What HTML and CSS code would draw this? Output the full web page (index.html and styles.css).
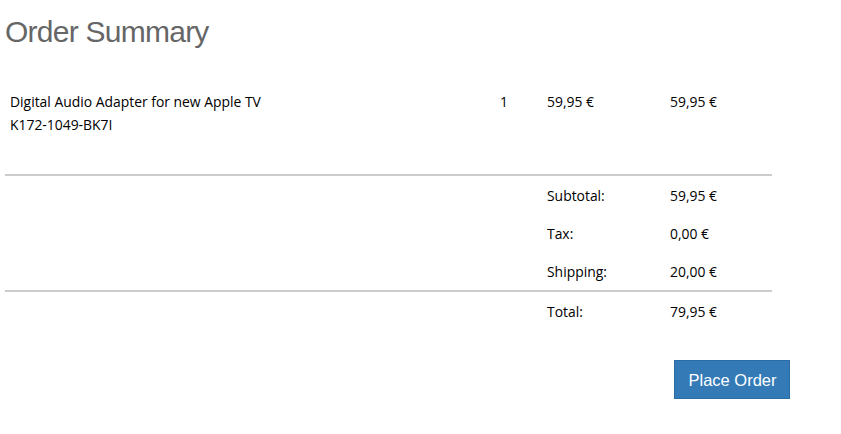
FILE: index.html
```html
<!DOCTYPE html>
<html>
<head>
<meta charset="utf-8">
<link rel="stylesheet" href="styles.css">
</head>
<body>
<div class="page">
  <h1 class="title">Order Summary</h1>
  <table class="summary">
    <colgroup>
      <col class="c-name"><col class="c-qty"><col class="c-price"><col class="c-total">
    </colgroup>
    <tbody>
      <tr class="item">
        <td><div>Digital Audio Adapter for new Apple TV</div><div>K172-1049-BK7I</div></td>
        <td class="top">1</td>
        <td class="top">59,95 €</td>
        <td class="top">59,95 €</td>
      </tr>
      <tr class="sum first">
        <td></td><td></td><td>Subtotal:</td><td>59,95 €</td>
      </tr>
      <tr class="sum">
        <td></td><td></td><td>Tax:</td><td>0,00 €</td>
      </tr>
      <tr class="sum">
        <td></td><td></td><td>Shipping:</td><td>20,00 €</td>
      </tr>
      <tr class="sum total">
        <td></td><td></td><td>Total:</td><td>79,95 €</td>
      </tr>
    </tbody>
  </table>
  <div class="actions">
    <button class="btn">Place Order</button>
  </div>
</div>
</body>
</html>
```

FILE: styles.css
```css
html, body {
  margin: 0;
  padding: 0;
  background: #fff;
}
body {
  font-family: "Open Sans", "Liberation Sans", Arial, sans-serif;
  font-size: 13.9px;
  color: #000;
}
.page {
  padding: 0 5px;
}
.title {
  margin: 0;
  padding-top: 10px;
  font-family: "Liberation Sans", Arial, sans-serif;
  font-size: 30px;
  letter-spacing: -0.75px;
  line-height: 44px;
  font-weight: normal;
  color: #666;
}
.summary {
  width: 767px;
  border-collapse: collapse;
  table-layout: fixed;
}
.c-name { width: 490px; }
.c-qty { width: 47px; }
.c-price { width: 123px; }
.c-total { width: 107px; }
.summary td {
  padding: 0 0 0 5px;
  vertical-align: middle;
}
.item td {
  padding-top: 36px;
  padding-bottom: 38px;
  line-height: 23px;
  vertical-align: top;
}
.sum td {
  height: 38px;
}
.sum.first td, .sum.total td {
  border-top: 2px solid #ccc;
}
.actions {
  display: flex;
  padding-top: 30px;
  padding-left: 669px;
}
.btn {
  font-family: "Liberation Sans", Arial, sans-serif;
  font-size: 16.5px;
  color: #fff;
  background: #337ab7;
  border: 1px solid #2e6da4;
  border-radius: 0;
  width: 116px;
  height: 39px;
  padding: 0 0 0 1px;
  line-height: 39px;
}
```
